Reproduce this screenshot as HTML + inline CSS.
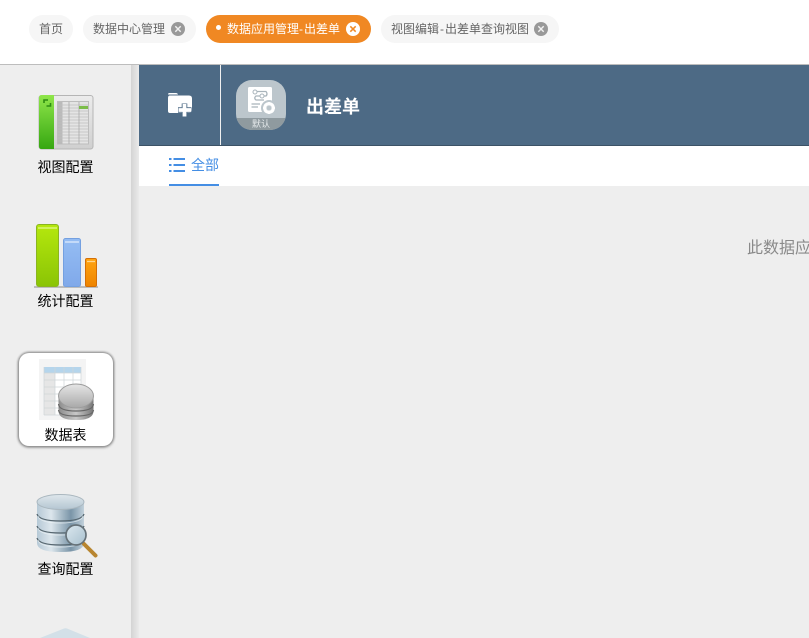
<!DOCTYPE html>
<html lang="zh">
<head>
<meta charset="utf-8">
<style>
html,body{margin:0;padding:0;width:809px;height:638px;overflow:hidden;background:#eee;font-family:"Liberation Sans","WenQuanYi Zen Hei","Noto Sans CJK SC",sans-serif;}
.a{position:absolute;}
.tab{position:absolute;top:15px;height:28px;border-radius:14px;background:#f6f6f6;color:#666;font-size:12px;line-height:28px;white-space:nowrap;}
.tab span{position:absolute;top:0;}
.tab svg{position:absolute;top:7px;}
.tab b{font-weight:normal;padding:0 1px;}
.lbl{position:absolute;left:0;width:131px;text-align:center;font-size:14px;line-height:18px;color:#000;}
</style>
</head>
<body>
<div class="a" style="left:0;top:0;width:809px;height:64px;background:#fff;"></div>
<div class="a" style="left:0;top:64px;width:809px;height:1px;background:#bdbdbd;"></div>

<div class="tab" style="left:29px;width:44px;"><span style="left:10px;">首页</span></div>
<div class="tab" style="left:83px;width:113px;"><span style="left:10px;">数据中心管理</span>
<svg style="left:88px;" width="14" height="14" viewBox="0 0 14 14"><circle cx="7" cy="7" r="7" fill="#999"/><path d="M4.300 4.300l5.400 5.400M9.700 4.300l-5.400 5.400" stroke="#f2f2f2" stroke-width="1.400"/></svg></div>
<div class="tab" style="left:206px;width:165px;background:#f08823;color:#fff;"><span style="left:21px;">数据应用管理<b style="padding:0 1px 0 0;">-</b>出差单</span>
<i class="a" style="left:10px;top:10px;width:5px;height:5px;border-radius:50%;background:#fff;"></i>
<svg style="left:140px;" width="14" height="14" viewBox="0 0 14 14"><circle cx="7" cy="7" r="7" fill="#fff"/><path d="M4.300 4.300l5.400 5.400M9.700 4.300l-5.400 5.400" stroke="#f08823" stroke-width="1.500"/></svg></div>
<div class="tab" style="left:381px;width:178px;"><span style="left:10px;">视图编辑<b>-</b>出差单查询视图</span>
<svg style="left:153px;" width="14" height="14" viewBox="0 0 14 14"><circle cx="7" cy="7" r="7" fill="#999"/><path d="M4.300 4.300l5.400 5.400M9.700 4.300l-5.400 5.400" stroke="#f2f2f2" stroke-width="1.400"/></svg></div>

<!-- sidebar -->
<div class="a" style="left:0;top:65px;width:131px;height:573px;background:#eee;"></div>
<div class="a" style="left:131px;top:65px;width:8px;height:573px;background:linear-gradient(90deg,#d4d4d4,#eaeaea);"></div>

<!-- header -->
<div class="a" style="left:139px;top:65px;width:670px;height:80px;background:#4d6a85;"></div>
<div class="a" style="left:139px;top:145px;width:670px;height:1px;background:#3c5266;"></div>
<div class="a" style="left:220px;top:65px;width:1px;height:80px;background:#f0f0f0;"></div>
<svg class="a" style="left:167px;top:92px;" width="26" height="26" viewBox="0 0 26 26">
<path d="M1 2.500Q1 1 2.500 1H9Q10.500 1 11 2.500Z" fill="#fff"/>
<path d="M1 6Q1 3.500 3 3.500H22Q25 3.500 25 6.500V18Q25 21 22 21H3Q1 21 1 19Z" fill="#fff"/>
<path d="M17.500 11.500V25M11 18H24.500" stroke="#4d6a85" stroke-width="5.600"/>
<path d="M17.500 12V24.500M11.500 18H24" stroke="#fff" stroke-width="3.800"/>
</svg>
<svg class="a" style="left:236px;top:80px;" width="50" height="50" viewBox="0 0 50 50">
<defs><clipPath id="c"><rect width="50" height="50" rx="16"/></clipPath></defs>
<g clip-path="url(#c)"><rect width="50" height="50" fill="#bcc6cc"/><rect y="38" width="50" height="12" fill="#8f9a9f"/></g>
<rect x="12" y="7" width="24" height="25" rx="1.500" fill="#fff"/>
<path d="M18 11.500H30Q32 14 30 16H20Q17.500 18 20 20H28" fill="none" stroke="#a9b4bb" stroke-width="1.300"/>
<circle cx="19" cy="12" r="2" fill="#fff" stroke="#a9b4bb"/><circle cx="26" cy="16" r="2" fill="#fff" stroke="#a9b4bb"/>
<path d="M15.500 24H24M15.500 27H22" stroke="#a9b4bb" stroke-width="1.300"/>
<circle cx="33" cy="28" r="8" fill="#bcc6cc"/>
<circle cx="33" cy="28" r="4.500" fill="none" stroke="#fff" stroke-width="2.800"/>
<path d="M33 22V34M27 28H39M28.800 23.800L37.200 32.200M37.200 23.800L28.800 32.200" stroke="#fff" stroke-width="1.700"/>
<circle cx="33" cy="28" r="2.500" fill="#bcc6cc"/>
</svg>
<div class="a" style="left:236px;top:119px;width:50px;text-align:center;font-size:9px;line-height:11px;color:#e4e8ea;">默认</div>
<div class="a" style="left:306px;top:95px;font-size:18px;line-height:24px;font-weight:bold;color:#fff;">出差单</div>

<!-- tabs row -->
<div class="a" style="left:139px;top:146px;width:670px;height:40px;background:#fff;"></div>
<svg class="a" style="left:169px;top:158px;" width="16" height="15" viewBox="0 0 16 15">
<path d="M0 1H2.500M4.500 1H16M0 7H2.500M4.500 7H16M0 13H2.500M4.500 13H16" stroke="#448ee4" stroke-width="2"/>
</svg>
<div class="a" style="left:191px;top:156px;font-size:14px;line-height:18px;color:#448ee4;">全部</div>
<div class="a" style="left:169px;top:184px;width:50px;height:2px;background:#448ee4;"></div>

<div class="a" style="left:747px;top:239px;font-size:16px;line-height:20px;color:#8a8a8a;white-space:nowrap;">此数据应用</div>

<!-- icon 1 -->
<svg class="a" style="left:38px;top:94px;" width="56" height="58" viewBox="0 0 56 58">
<defs>
<linearGradient id="g1" x1="0" y1="0" x2="0" y2="1"><stop offset="0" stop-color="#8fe64a"/><stop offset="1" stop-color="#36a711"/></linearGradient>
<linearGradient id="g2" x1="0" y1="0" x2="0" y2="1"><stop offset="0" stop-color="#ececec"/><stop offset="1" stop-color="#d0d0d0"/></linearGradient>
</defs>
<rect x="1" y="1.500" width="54" height="53.500" rx="2.500" fill="url(#g2)" stroke="#b5b5b5"/>
<path d="M1 4.500Q1 1 3.500 1H16V55H3.500Q1 55 1 52Z" fill="url(#g1)"/>
<rect x="19.500" y="7.500" width="31" height="42.500" fill="#e4e4e4" stroke="#bdbdbd"/>
<rect x="20" y="8" width="4.500" height="42" fill="#bababa"/>
<path d="M20 11H50M20 14H50M20 17H50M20 20H50M20 23H50M20 26H50M20 29H50M20 32H50M20 35H50M20 38H50M20 41H50M20 44H50M20 47H50" stroke="#bebebe" stroke-width=".8"/>
<path d="M31 8V50M41 8V50" stroke="#aaa" stroke-width=".8"/>
<rect x="41" y="12" width="9" height="3" fill="#7cbd4a"/>
<path d="M6 9V6H10M12.500 9V12H8.500" fill="none" stroke="#2d8c12" stroke-width="1.600"/>
</svg>
<div class="lbl" style="top:158px;">视图配置</div>

<!-- icon 2 -->
<svg class="a" style="left:34px;top:222px;" width="66" height="68" viewBox="0 0 66 68">
<defs>
<linearGradient id="b1" x1="0" y1="0" x2="0" y2="1"><stop offset="0" stop-color="#b5e80d"/><stop offset="1" stop-color="#8ac405"/></linearGradient>
<linearGradient id="b2" x1="0" y1="0" x2="0" y2="1"><stop offset="0" stop-color="#95bdf3"/><stop offset="1" stop-color="#80a9ea"/></linearGradient>
<linearGradient id="b3" x1="0" y1="0" x2="0" y2="1"><stop offset="0" stop-color="#ffa412"/><stop offset="1" stop-color="#ee8400"/></linearGradient>
</defs>
<rect x="0" y="64" width="64" height="2" fill="#bcbcbc"/>
<rect x="2.500" y="2.500" width="22" height="62" rx="2.500" fill="url(#b1)" stroke="#8ab520"/>
<path d="M4 6H23" stroke="#dcf57a" stroke-width="1.500"/>
<rect x="29.500" y="16.500" width="17" height="48" rx="2" fill="url(#b2)" stroke="#74a0e0"/>
<path d="M31 20H45" stroke="#d4e4fb" stroke-width="1.500"/>
<rect x="51.500" y="36.500" width="11" height="28" rx="1.500" fill="url(#b3)" stroke="#d56f04"/>
<path d="M53 39.500H61" stroke="#ffd690" stroke-width="1.300"/>
</svg>
<div class="lbl" style="top:292px;">统计配置</div>

<!-- selected card -->
<div class="a" style="left:19px;top:353px;width:94px;height:93px;background:#fff;border-radius:10px;box-shadow:0 0 2px 1px #888,0 1px 3px #999;"></div>
<svg class="a" style="left:38px;top:358px;" width="58" height="66" viewBox="0 0 58 66">
<defs>
<linearGradient id="d1" x1="0" y1="0" x2="0" y2="1"><stop offset="0" stop-color="#e6e6e6"/><stop offset="1" stop-color="#a8a8a8"/></linearGradient>
<linearGradient id="d2" x1="0" y1="0" x2="1" y2="0"><stop offset="0" stop-color="#8b8b8b"/><stop offset=".5" stop-color="#c8c8c8"/><stop offset="1" stop-color="#777"/></linearGradient>
</defs>
<rect x="1" y="1" width="47" height="61" fill="#f4f4f4"/>
<rect x="6" y="9" width="37" height="48" fill="#fff"/>
<rect x="6" y="9" width="37" height="6" fill="#b5d5ec"/>
<rect x="6" y="15" width="11" height="42" fill="#e6e6e6"/>
<path d="M6 15H43M6 22H43M6 29H43M6 36H43M6 43H43M6 50H43M6 57H43M6 9V57M17 9V57M26 9V57M35 9V57M43 9V57" stroke="#cfd5d8" stroke-width=".7" fill="none"/>
<path d="M20.500 38H55.500V53Q55.500 62 38 62Q20.500 62 20.500 53Z" fill="url(#d2)"/>
<path d="M20.500 46Q21 53 38 53Q55 53 55.500 46M20.500 52Q21 58 38 58Q55 58 55.500 52" fill="none" stroke="#666" stroke-width="1.200"/>
<ellipse cx="38" cy="38" rx="17.500" ry="12" fill="url(#d1)" stroke="#9c9c9c"/>
</svg>
<div class="lbl" style="top:426px;">数据表</div>

<!-- icon 4 -->
<svg class="a" style="left:36px;top:493px;" width="62" height="66" viewBox="0 0 62 66">
<defs>
<linearGradient id="e1" x1="0" y1="0" x2="1" y2="0"><stop offset="0" stop-color="#b6c9d6"/><stop offset=".3" stop-color="#dce6ec"/><stop offset=".72" stop-color="#7a95a8"/><stop offset="1" stop-color="#c2d1db"/></linearGradient>
<linearGradient id="e2" x1="0" y1="0" x2="0" y2="1"><stop offset="0" stop-color="#dfe7ec"/><stop offset="1" stop-color="#b4c6d2"/></linearGradient>
<linearGradient id="e3" x1="0" y1="0" x2="1" y2="1"><stop offset="0" stop-color="#dbe8ef"/><stop offset="1" stop-color="#a8c0ce"/></linearGradient>
</defs>
<path d="M1 9H48V50Q48 59 24.500 59Q1 59 1 50Z" fill="url(#e1)"/>
<path d="M1 21Q3 28 24.500 28Q46 28 48 21M1 33Q3 40 24.500 40Q46 40 48 33M1 45Q3 52 24.500 52Q46 52 48 45" fill="none" stroke="#56666f" stroke-width="1.300"/>
<path d="M2 23Q4 30 24.500 30Q45 30 47 23M2 35Q4 42 24.500 42Q45 42 47 35M2 47Q4 54 24.500 54Q45 54 47 47" fill="none" stroke="#eef3f6" stroke-width=".9" opacity=".7"/>
<ellipse cx="24.500" cy="9" rx="23.500" ry="7.500" fill="url(#e2)" stroke="#aab7bf"/>
<path d="M48 51L59.500 62.500" stroke="#b88530" stroke-width="4" stroke-linecap="round"/>
<circle cx="40" cy="42" r="10" fill="url(#e3)" stroke="#667279" stroke-width="1.700"/>
</svg>
<div class="lbl" style="top:560px;">查询配置</div>

<!-- partial icon 5 -->
<svg class="a" style="left:36px;top:627px;" width="60" height="11" viewBox="0 0 60 11">
<path d="M4 11L28 1.500Q29.500 1 31 1.500L54 11Z" fill="#d3e0e8"/>
</svg>
</body>
</html>
